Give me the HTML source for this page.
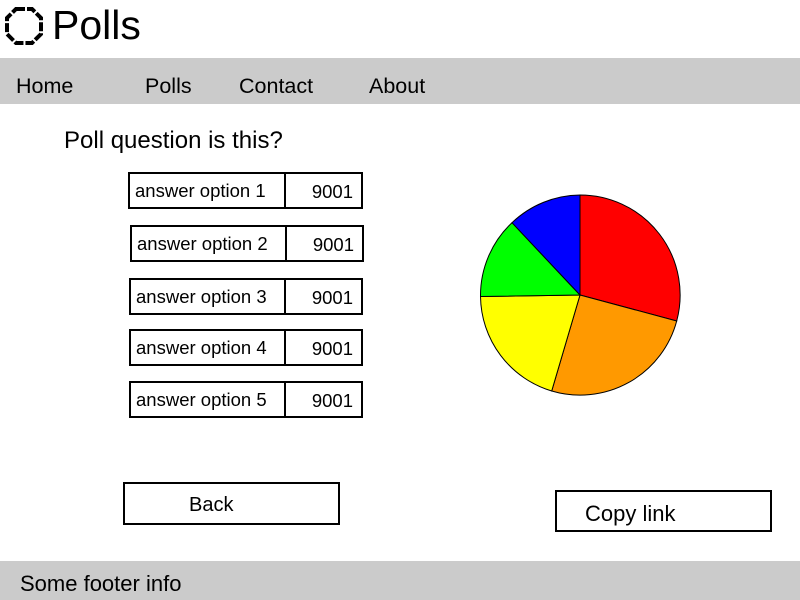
<!DOCTYPE html>
<html><head><style>
*{margin:0;padding:0;box-sizing:border-box}
body{width:800px;height:600px;background:#fff;position:relative;overflow:hidden;font-family:"Liberation Sans",sans-serif;color:#000}
.a{position:absolute;white-space:nowrap}
.nav{position:absolute;left:0;top:58px;width:800px;height:46px;background:#cbcbcb}
.foot{position:absolute;left:0;top:561px;width:800px;height:39px;background:#cbcbcb}
.box{position:absolute;border:2px solid #000;height:37px;font-size:18.5px}
.box .l{position:absolute;left:5px;top:6px}
.box .d{position:absolute;top:0;bottom:0;border-left:2px solid #000}
.box .n{position:absolute;right:8px;top:7px}
.btn{position:absolute;border:2px solid #000;font-size:20px}
</style></head><body>
<svg class="a" style="left:4px;top:6px" width="40" height="40" viewBox="0 0 40 40">
<polygon points="12,3 28,3 37,12 37,28 28,37 12,37 3,28 3,12" fill="none" stroke="#000" stroke-width="4" stroke-dasharray="9 2"/>
</svg>
<div class="a" style="left:52px;top:2px;font-size:41px">Polls</div>
<div class="nav"></div>
<div class="a" style="left:16px;top:74px;font-size:21.5px">Home</div>
<div class="a" style="left:145px;top:74px;font-size:21.5px">Polls</div>
<div class="a" style="left:239px;top:74px;font-size:21.5px">Contact</div>
<div class="a" style="left:369px;top:74px;font-size:21.5px">About</div>
<div class="a" style="left:64px;top:127px;font-size:24px">Poll question is this?</div>

<div class="box" style="left:128px;top:172px;width:235px"><span class="l">answer option 1</span><span class="d" style="left:154px"></span><span class="n">9001</span></div>
<div class="box" style="left:130px;top:225px;width:234px"><span class="l">answer option 2</span><span class="d" style="left:153px"></span><span class="n">9001</span></div>
<div class="box" style="left:129px;top:278px;width:234px"><span class="l">answer option 3</span><span class="d" style="left:153px"></span><span class="n">9001</span></div>
<div class="box" style="left:129px;top:329px;width:234px"><span class="l">answer option 4</span><span class="d" style="left:153px"></span><span class="n">9001</span></div>
<div class="box" style="left:129px;top:381px;width:234px"><span class="l">answer option 5</span><span class="d" style="left:153px"></span><span class="n">9001</span></div>

<svg class="a" style="left:0;top:0" width="800" height="600">
<g stroke="#000" stroke-width="1">
<path d="M580,295 L580,195 A100,100 0 0 1 676.7,321 Z" fill="#ff0000"/>
<path d="M580,295 L676.7,321 A100,100 0 0 1 551.7,391 Z" fill="#ff9900"/>
<path d="M580,295 L551.7,391 A100,100 0 0 1 480.5,296.5 Z" fill="#ffff00"/>
<path d="M580,295 L480.5,296.5 A100,100 0 0 1 512,222.7 Z" fill="#00ff00"/>
<path d="M580,295 L512,222.7 A100,100 0 0 1 580,195 Z" fill="#0000ff"/>
</g>
</svg>

<div class="btn" style="left:123px;top:482px;width:217px;height:43px"><span class="a" style="left:64px;top:10px">Back</span></div>
<div class="btn" style="left:555px;top:490px;width:217px;height:42px"><span class="a" style="left:28px;top:9px;font-size:22px">Copy link</span></div>
<div class="foot"></div>
<div class="a" style="left:20px;top:571px;font-size:22px">Some footer info</div>
</body></html>
